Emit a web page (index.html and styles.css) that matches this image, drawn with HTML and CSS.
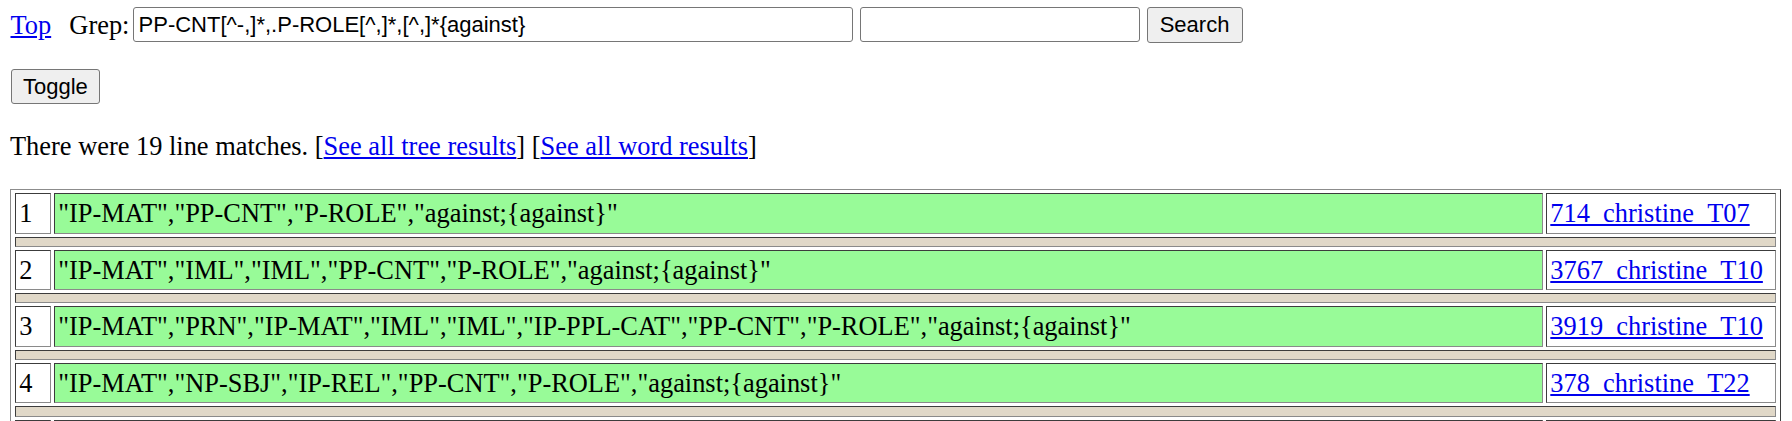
FILE: index.html
```html
<!DOCTYPE html>
<html lang="en">
<head>
<meta charset="utf-8">
<title>Grep results</title>
<link rel="stylesheet" href="styles.css">
</head>
<body>
<div class="bar">
  <a class="top-link" href="#">Top</a>
  <span class="grep">Grep:</span><input class="field pattern" type="text" value="PP-CNT[^-,]*,.P-ROLE[^,]*,[^,]*{against}"><input class="field extra" type="text" value=""><button class="btn search" type="button">Search</button>
</div>
<div class="toggle-row"><button class="btn toggle" type="button">Toggle</button></div>
<p class="summary">There were 19 line matches. [<a href="#">See all tree results</a>] [<a href="#">See all word results</a>]</p>
<table class="results">
  <tr><td class="num">1</td><td class="match">"IP-MAT","PP-CNT","P-ROLE","against;{against}"</td><td class="ref"><a href="#">714_christine_T07</a></td></tr>
  <tr><td class="sep" colspan="3"><div class="sep-fill"></div></td></tr>
  <tr><td class="num">2</td><td class="match">"IP-MAT","IML","IML","PP-CNT","P-ROLE","against;{against}"</td><td class="ref"><a href="#">3767_christine_T10</a></td></tr>
  <tr><td class="sep" colspan="3"><div class="sep-fill"></div></td></tr>
  <tr><td class="num">3</td><td class="match">"IP-MAT","PRN","IP-MAT","IML","IML","IP-PPL-CAT","PP-CNT","P-ROLE","against;{against}"</td><td class="ref"><a href="#">3919_christine_T10</a></td></tr>
  <tr><td class="sep" colspan="3"><div class="sep-fill"></div></td></tr>
  <tr><td class="num">4</td><td class="match">"IP-MAT","NP-SBJ","IP-REL","PP-CNT","P-ROLE","against;{against}"</td><td class="ref"><a href="#">378_christine_T22</a></td></tr>
  <tr><td class="sep" colspan="3"><div class="sep-fill"></div></td></tr>
  <tr><td class="num">5</td><td class="match">"IP-MAT","PP-CNT","P-ROLE","against;{against}"</td><td class="ref"><a href="#">412_christine_T24</a></td></tr>
  <tr><td class="sep" colspan="3"><div class="sep-fill"></div></td></tr>
</table>
</body>
</html>
```
FILE: styles.css
```css
html, body {
  margin: 0;
  background: #ffffff;
}
body {
  padding: 7px 11px 0 10px;
  font-family: "Liberation Serif", "Times New Roman", serif;
  font-size: 26.4px;
  color: #000000;
}
a {
  color: #0000ee;
  text-decoration: underline;
}
.bar {
  display: flex;
  align-items: center;
  height: 35.5px;
  line-height: 30.3px;
}
.top-link {
  margin-left: 0.5px;
}
.grep {
  margin-left: 18.2px;
}
.field {
  height: 35px;
  box-sizing: border-box;
  border: 1px solid #767676;
  border-radius: 3px;
  font-family: "Liberation Sans", Arial, sans-serif;
  font-size: 22px;
  padding: 0 4px 0 5px;
  color: #000000;
  background: #ffffff;
  outline: none;
}
.pattern {
  width: 720px;
  margin-left: 3.1px;
}
.extra {
  width: 280px;
  margin-left: 7px;
}
.btn {
  height: 35.5px;
  box-sizing: border-box;
  border: 1px solid #767676;
  border-radius: 3px;
  background: #efefef;
  font-family: "Liberation Sans", Arial, sans-serif;
  font-size: 22px;
  color: #000000;
  padding: 0;
}
.search {
  width: 96px;
  margin-left: 7px;
}
.toggle-row {
  margin-top: 26.8px;
  height: 35px;
}
.toggle {
  width: 89.5px;
  height: 35px;
  margin-left: 0.7px;
}
.summary {
  margin: 26.6px 0 0;
  line-height: 30.3px;
}
.results {
  margin-top: 28.1px;
  width: 100%;
  border-collapse: separate;
  border-spacing: 3px;
  padding: 0 1px;
  border: 1px solid;
  border-color: #8c8c8c #3f3f3f #3f3f3f #8c8c8c;
}
.results td {
  box-sizing: border-box;
  border: 1px solid;
  border-color: #3c3c3c #8a8a8a #8a8a8a #3c3c3c;
  padding: 2.8px 3.3px 1.8px;
  line-height: 33.7px;
  vertical-align: middle;
  white-space: nowrap;
}
.results td.num {
  width: 36px;
  background: #ffffff;
}
.results td.match {
  background: #98fb98;
}
.results td.ref {
  width: 230px;
  background: #ffffff;
}
.results td.sep {
  padding: 0;
  line-height: 0;
  background: #e0d8c8;
}
.sep-fill {
  height: 8.3px;
}
```
